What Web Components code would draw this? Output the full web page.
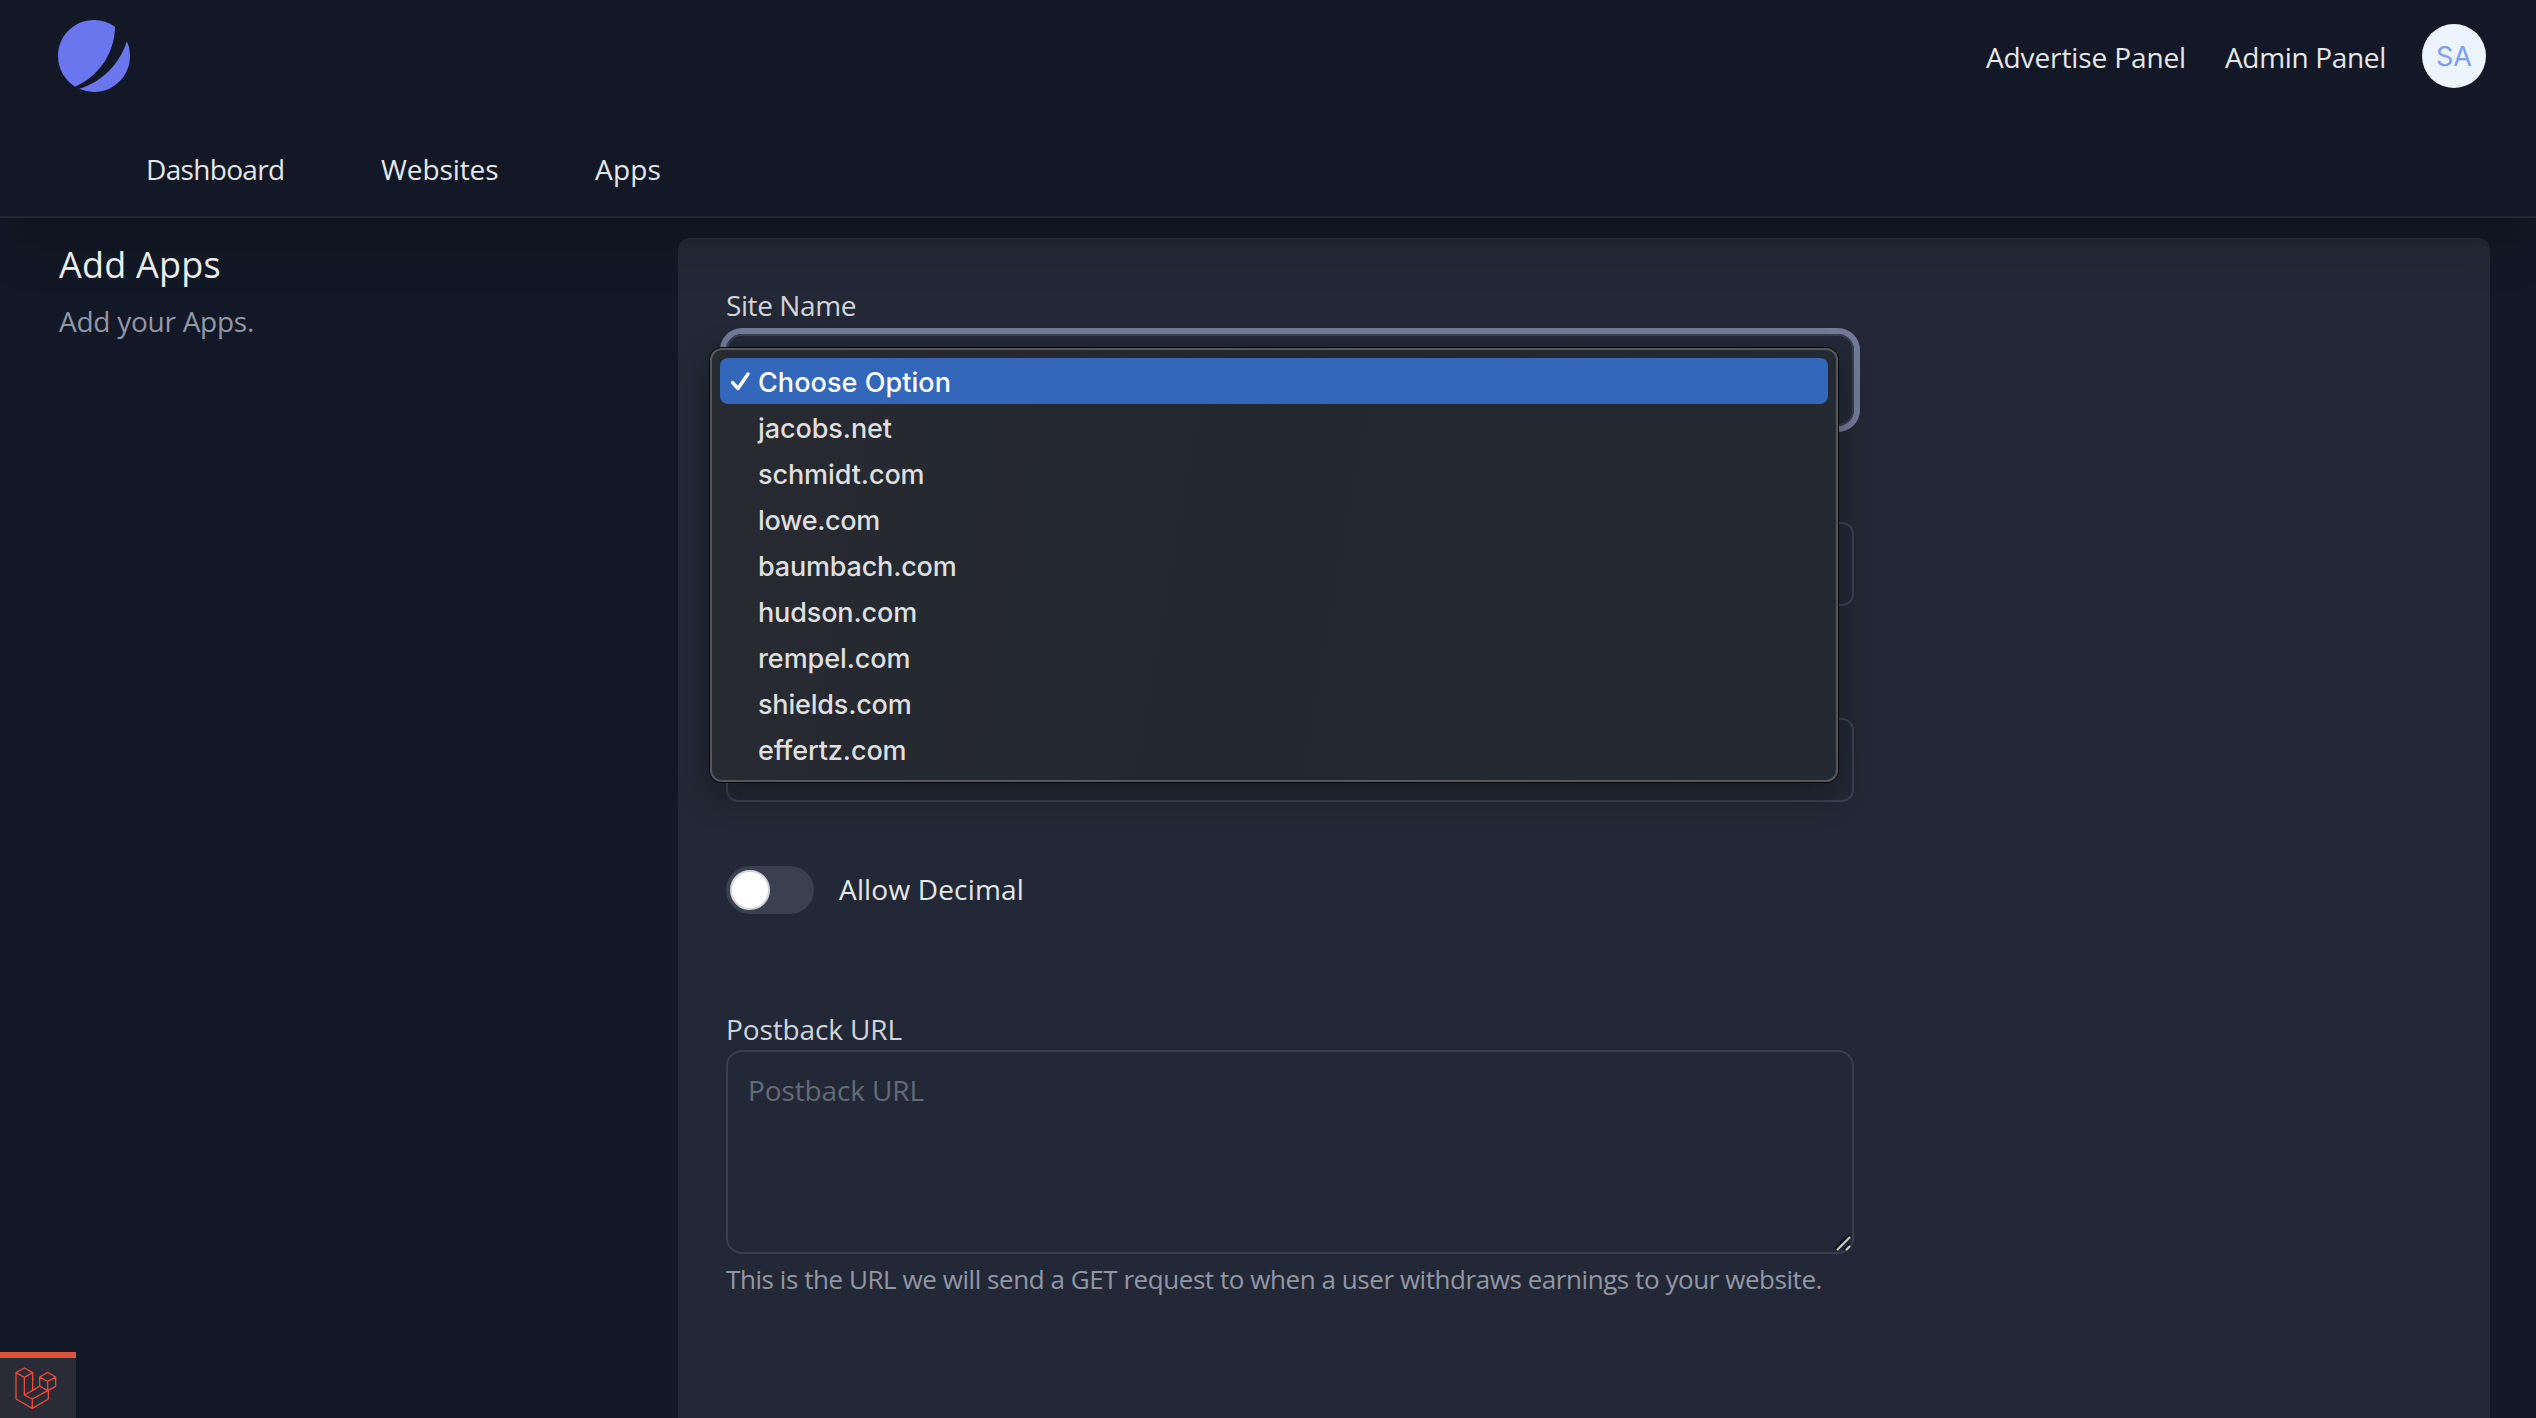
<!DOCTYPE html>
<html lang="en"><head><meta charset="utf-8"><title>Add Apps</title>
<style>
html,body{margin:0;height:1418px;overflow:hidden;background:#121825}
body{font-family:"Open Sans","Noto Sans",sans-serif;color:#e5e7eb}
</style></head><body>
<app-shell></app-shell>
<script>
const define=(name,html,setup)=>{
  const t=document.createElement('template');t.innerHTML=html;
  customElements.define(name,class extends HTMLElement{
    constructor(){super();this.attachShadow({mode:'open'}).appendChild(t.content.cloneNode(true));}
    connectedCallback(){if(setup)setup.call(this);}
  });
};

// Single line of text; the optional "w" attribute tracks the letters out to that width.
define('ui-text',`<style>:host{display:block;white-space:nowrap;font-size:28px;line-height:40px;font-weight:400}</style><slot></slot>`,function(){
  const w=+this.getAttribute('w');
  if(!w)return;
  const r=document.createRange();r.selectNodeContents(this);
  this.style.letterSpacing=((w-r.getBoundingClientRect().width)/this.textContent.length).toFixed(3)+'px';
});

define('brand-mark',`<style>:host{display:block;width:72px;height:72px}svg{display:block}</style>
<svg width="72" height="72" viewBox="0 0 48 48" fill="#6b76ee"><path d="M11.395 44.428C4.557 40.198 0 32.632 0 24 0 10.745 10.745 0 24 0a23.891 23.891 0 0113.997 4.502c-.2 17.907-11.097 33.245-26.602 39.926z"/><path d="M14.134 45.885A23.914 23.914 0 0024 48c13.255 0 24-10.745 24-24 0-3.516-.756-6.856-2.115-9.866-4.659 15.143-16.608 27.092-31.75 31.751z"/></svg>`);

define('user-avatar',`<style>:host{display:flex;width:64px;height:64px;border-radius:50%;background:#ebf4ff;color:#7f9cf5;align-items:center;justify-content:center;font:400 27px/64px "Inter",sans-serif}span{padding-top:2px}</style><span><slot></slot></span>`);

define('app-header',`<style>
:host{display:block;position:relative;z-index:1;height:216px;background:#121825;border-bottom:2px solid #222635;box-shadow:0 40px 50px -10px rgba(0,0,0,.1),0 20px 20px -10px rgba(0,0,0,.05)}
.top{display:flex;height:112px;box-sizing:border-box;padding:20px 50px 0 58px;align-items:flex-start}
.links{display:flex;margin-left:auto;margin-top:4px;align-items:flex-start}
.links ui-text{margin-top:13px}
nav{display:flex;padding:37px 0 0 146px}
</style>
<div class="top"><brand-mark></brand-mark><div class="links">
<ui-text w="200" style="width:239px">Advertise Panel</ui-text><ui-text w="161" style="width:197px">Admin Panel</ui-text><user-avatar>SA</user-avatar></div></div>
<nav><ui-text w="138.5" style="width:235px">Dashboard</ui-text><ui-text w="117.5" style="width:214px">Websites</ui-text><ui-text w="66">Apps</ui-text></nav>`);

define('page-heading',`<style>:host{display:block;box-sizing:border-box;width:678px;padding:22px 0 0 59px}
.t{font-size:36px;line-height:50px;color:#f3f4f6}.s{color:#9297a5;margin-top:11px}</style>
<ui-text class="t" w="162">Add Apps</ui-text><ui-text class="s" w="195">Add your Apps.</ui-text>`);

define('form-field',`<style>:host{display:block}
.box{box-sizing:border-box;width:1128px;height:var(--h,84px);border:2px solid #384050;border-radius:var(--r,12px);position:relative}
:host([focused]) .box{box-shadow:0 0 0 6px #737a98;border-radius:16px;border-color:#374151}
</style><slot name="label"></slot><div class="box"><slot></slot></div><slot name="help"></slot>`);

define('resize-grip',`<style>:host{display:block;position:absolute;right:1px;bottom:1px;width:18px;height:18px}svg{display:block}</style>
<svg width="18" height="18" viewBox="0 0 18 18" fill="none" stroke-width="2"><path d="M2 16 16 2M11 16l5-5" stroke="#0b0e14"/><path d="M4 17 17 4M13 17l4-4" stroke="#c9cacc" stroke-width="2.2"/></svg>`);

define('toggle-switch',`<style>:host{display:flex;align-items:center;gap:25px}
.track{width:80px;height:40px;padding:4px;border-radius:24px;background:#3a4050}
.knob{width:36px;height:36px;border:2px solid #d1d5db;border-radius:50%;background:#fff}</style>
<div class="track"><div class="knob"></div></div><slot></slot>`);

define('menu-option',`<style>:host{display:flex;height:46px;box-sizing:border-box;align-items:center;border-radius:8px;color:#dfdfe0}
.c{width:38px;height:46px;flex:none}.c svg{display:none}
:host([selected]){background:#3267ba;color:#fff}:host([selected]) svg{display:block}
slot{display:block}</style><div class="c"><svg width="38" height="46" viewBox="0 0 38 46" fill="none" stroke="#fff" stroke-width="3.4" stroke-linecap="round" stroke-linejoin="round"><path d="M12.5 24.5 18 30.5 28 16"/></svg></div><slot></slot>`);

define('option-menu',`<style>:host{display:block;position:absolute;z-index:5;left:-18px;top:12px;width:1128px;height:434px;box-sizing:border-box;padding:8px;border:2px solid #54575c;border-radius:12px;background:linear-gradient(100deg,#282a31,#23282f 45%,#232a31);box-shadow:0 0 0 1px #05070a,0 12px 36px rgba(0,0,0,.32)}
ui-text{font:480 27px/46px "Inter",sans-serif;padding-top:4px}</style>
<menu-option selected><ui-text w="193">Choose Option</ui-text></menu-option>
<menu-option><ui-text w="134">jacobs.net</ui-text></menu-option>
<menu-option><ui-text w="166.5">schmidt.com</ui-text></menu-option>
<menu-option><ui-text w="122">lowe.com</ui-text></menu-option>
<menu-option><ui-text w="198.5">baumbach.com</ui-text></menu-option>
<menu-option><ui-text w="159">hudson.com</ui-text></menu-option>
<menu-option><ui-text w="152.5">rempel.com</ui-text></menu-option>
<menu-option><ui-text w="153.5">shields.com</ui-text></menu-option>
<menu-option><ui-text w="148.5">effertz.com</ui-text></menu-option>`);

define('app-form',`<style>:host{display:block;box-sizing:border-box;width:1812px;height:1200px;margin-top:20px;padding:47px 48px;border-radius:12px;background:#222835}
.label{color:#d1d4d9;height:49px}
.first{--h:92px}.second{margin-top:96px}.third{margin-top:112px}
toggle-switch{margin-top:64px}toggle-switch ui-text{padding-bottom:2px}
.url{margin-top:95px;--h:204px;--r:16px}
.url .label{height:41px}
.ph{padding:18px 0 0 20px;color:#646a78}
.help{font-size:26px;color:#9297a5;margin-top:5px}</style>
<form-field class="first" focused><ui-text slot="label" class="label" w="130">Site Name</ui-text><option-menu></option-menu></form-field>
<form-field class="second"></form-field>
<form-field class="third"></form-field>
<toggle-switch><ui-text w="185">Allow Decimal</ui-text></toggle-switch>
<form-field class="url"><ui-text slot="label" class="label" w="176">Postback URL</ui-text><ui-text class="ph" w="176">Postback URL</ui-text><resize-grip></resize-grip><ui-text slot="help" class="help" w="1096">This is the URL we will send a GET request to when a user withdraws earnings to your website.</ui-text></form-field>`);

define('debug-badge',`<style>:host{display:block;position:absolute;left:0;bottom:0;z-index:9;box-sizing:border-box;width:76px;height:66px;border-top:6px solid #d9533f;background:#292b36}
svg{display:block;margin:9px 0 0 15px}</style>
<svg width="42" height="42" viewBox="45 110 126 126" fill="none" stroke="#f0483a" stroke-width="3.9" stroke-linejoin="round"><path d="M48 127 73 113 98 127 73 141ZM48 127V206L97 234 145 206V181M73 141V194L97 206V234M98 127V180L73 194M97 206 143 181M98 180 119 167M119 140 143 126 167 140 143 153ZM119 140V167L143 181 167 168V140M143 153V181"/></svg>`);

define('app-shell',`<style>:host{display:block;position:relative;height:1418px;overflow:hidden}
main{display:flex;align-items:flex-start}</style>
<app-header></app-header><main><page-heading></page-heading><app-form></app-form></main><debug-badge></debug-badge>`);
</script></body></html>
